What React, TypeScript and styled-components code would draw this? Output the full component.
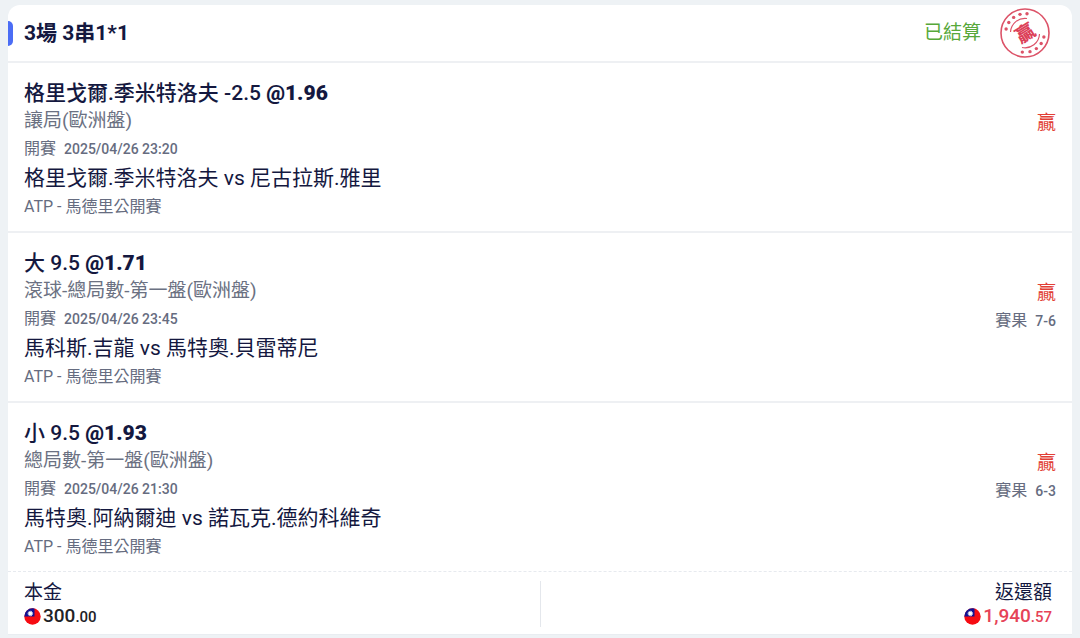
import React from "react";
import styled, { createGlobalStyle } from "styled-components";

const GlobalStyle = createGlobalStyle`
  *, *::before, *::after { box-sizing: border-box; }
  body {
    margin: 0;
    background: #eef2f5;
    color: #14183f;
    font-family: Roboto, "Noto Sans CJK TC", sans-serif;
  }
  h1, h2, p, dl, dt, dd { margin: 0; font-weight: 400; }
`;

const Page = styled.main`
  padding: 5px 8px 2px;
`;

const Card = styled.article`
  background: #fff;
  border-radius: 12px 12px 0 0;
  border-bottom: 1px solid #e9edf1;
  overflow: hidden;
`;

const Header = styled.header`
  display: flex;
  align-items: center;
  height: 58px;
  padding-right: 21px;
  border-bottom: 2px solid #eef0f3;
`;

const Marker = styled.span`
  width: 5px;
  height: 25px;
  margin-right: 11px;
  border-radius: 0 5px 5px 0;
  background: #4b6df5;
`;

const Heading = styled.h1`
  flex: 1;
  font-size: 21px;
  line-height: 28px;
  font-weight: 700;
`;

const Status = styled.span`
  margin-right: 18px;
  font-size: 19px;
  line-height: 28px;
  color: #57a83a;
`;

const Leg = styled.section`
  display: flex;
  justify-content: space-between;
  padding: 16px 16px 10px;
  & + & { border-top: 2px solid #eef0f3; }
`;

const Title = styled.h2`
  font-size: 21px;
  line-height: 28px;
  font-weight: 500;
`;

const Odds = styled.strong`
  font-weight: 900;
`;

const Market = styled.p`
  font-size: 19px;
  line-height: 28px;
  color: #6b7182;
`;

const Meta = styled.p`
  font-size: 16px;
  line-height: 28px;
  color: #666c80;
`;

const Figure = styled.span`
  margin-left: 8px;
  font-size: 14px;
  line-height: 20px;
  font-weight: 500;
`;

const Match = styled.p`
  font-size: 21px;
  line-height: 30px;
`;

const Result = styled.div`
  padding-top: 30px;
  text-align: right;
`;

const Outcome = styled.p`
  font-size: 19px;
  line-height: 28px;
  color: #e23f36;
`;

const Totals = styled.dl`
  display: grid;
  grid-template-columns: 1fr 1fr;
  padding: 9px 0 7px;
  border-top: 1px dashed #e7eaef;
`;

const Total = styled.div<{ $end?: boolean }>`
  display: flex;
  flex-direction: column;
  align-items: ${(p) => (p.$end ? "flex-end" : "flex-start")};
  padding: ${(p) => (p.$end ? "0 20px 0 0" : "0 0 0 16px")};
  & + & { border-left: 1px solid #e4e7ec; }
`;

const Label = styled.dt`
  font-size: 19px;
  line-height: 24px;
`;

const Amount = styled.dd<{ $win?: boolean }>`
  display: flex;
  align-items: center;
  gap: 2px;
  height: 22px;
  font-size: 19px;
  line-height: 22px;
  font-weight: 500;
  color: ${(p) => (p.$win ? "#e64357" : "#222226")};
`;

const Cents = styled.span`
  font-size: 15px;
  line-height: 20px;
`;

const polar = (deg: number, r: number) => {
  const a = (deg * Math.PI) / 180;
  return [26 + r * Math.cos(a), 26 + r * Math.sin(a)];
};

const dotAngles = [192, 213, 234, 255, 276, 12, 33, 54, 75, 98];

const Stamp = () => (
  <svg width="52" height="52" viewBox="0 0 52 52" role="img" aria-label="贏">
    <g fill="none" stroke="#dc5368">
      <circle cx="26" cy="26" r="24" strokeWidth="1.6" />
      <path d="M11.5 25A14.5 14.5 0 0 1 28 11.5" strokeWidth="1.2" />
      <path d="M40.5 27A14.5 14.5 0 0 1 23 40.5" strokeWidth="1.2" />
    </g>
    {dotAngles.map((d) => {
      const [x, y] = polar(d, 19.3);
      return <circle key={d} cx={x} cy={y} r="1.7" fill="#dc5368" />;
    })}
    <text
      x="26"
      y="33"
      textAnchor="middle"
      transform="rotate(-32 26 26)"
      fontFamily="'Noto Sans CJK TC', sans-serif"
      fontSize="19"
      fontWeight="900"
      fill="#dc4058"
    >
      贏
    </text>
  </svg>
);

const rays = Array.from({ length: 12 }, (_, i) => i * 30);

const Flag = () => (
  <svg width="17" height="17" viewBox="0 0 17 17" aria-hidden="true">
    <circle cx="8.5" cy="8.5" r="8.2" fill="#f60b12" />
    <path d="M8.5 0.3A8.2 8.2 0 0 0 0.3 8.5H10.5V0.6Z" fill="#101394" />
    <circle cx="6.3" cy="5.5" r="1.9" fill="#fff" />
    {rays.map((r) => (
      <path key={r} d="M5.7 3.6L6.3 2.4L6.9 3.6Z" fill="#fff" transform={`rotate(${r} 6.3 5.5)`} />
    ))}
  </svg>
);

type LegData = {
  pick: string;
  odds: string;
  market: string;
  time: string;
  match: string;
  score?: string;
};

const legs: LegData[] = [
  {
    pick: "格里戈爾.季米特洛夫 -2.5",
    odds: "@1.96",
    market: "讓局(歐洲盤)",
    time: "2025/04/26 23:20",
    match: "格里戈爾.季米特洛夫 vs 尼古拉斯.雅里",
  },
  {
    pick: "大 9.5",
    odds: "@1.71",
    market: "滾球-總局數-第一盤(歐洲盤)",
    time: "2025/04/26 23:45",
    match: "馬科斯.吉龍 vs 馬特奧.貝雷蒂尼",
    score: "7-6",
  },
  {
    pick: "小 9.5",
    odds: "@1.93",
    market: "總局數-第一盤(歐洲盤)",
    time: "2025/04/26 21:30",
    match: "馬特奧.阿納爾迪 vs 諾瓦克.德約科維奇",
    score: "6-3",
  },
];

export default function App() {
  return (
    <>
      <GlobalStyle />
      <Page lang="zh-Hant">
        <Card>
          <Header>
            <Marker />
            <Heading>3場 3串1*1</Heading>
            <Status>已結算</Status>
            <Stamp />
          </Header>
          {legs.map((leg) => (
            <Leg key={leg.time}>
              <div>
                <Title>
                  {leg.pick} <Odds>{leg.odds}</Odds>
                </Title>
                <Market>{leg.market}</Market>
                <Meta>
                  開賽<Figure>{leg.time}</Figure>
                </Meta>
                <Match>{leg.match}</Match>
                <Meta>ATP - 馬德里公開賽</Meta>
              </div>
              <Result>
                <Outcome>贏</Outcome>
                {leg.score && (
                  <Meta>
                    賽果<Figure>{leg.score}</Figure>
                  </Meta>
                )}
              </Result>
            </Leg>
          ))}
          <Totals>
            <Total>
              <Label>本金</Label>
              <Amount>
                <Flag />
                <span>300<Cents>.00</Cents></span>
              </Amount>
            </Total>
            <Total $end>
              <Label>返還額</Label>
              <Amount $win>
                <Flag />
                <span>1,940<Cents>.57</Cents></span>
              </Amount>
            </Total>
          </Totals>
        </Card>
      </Page>
    </>
  );
}
